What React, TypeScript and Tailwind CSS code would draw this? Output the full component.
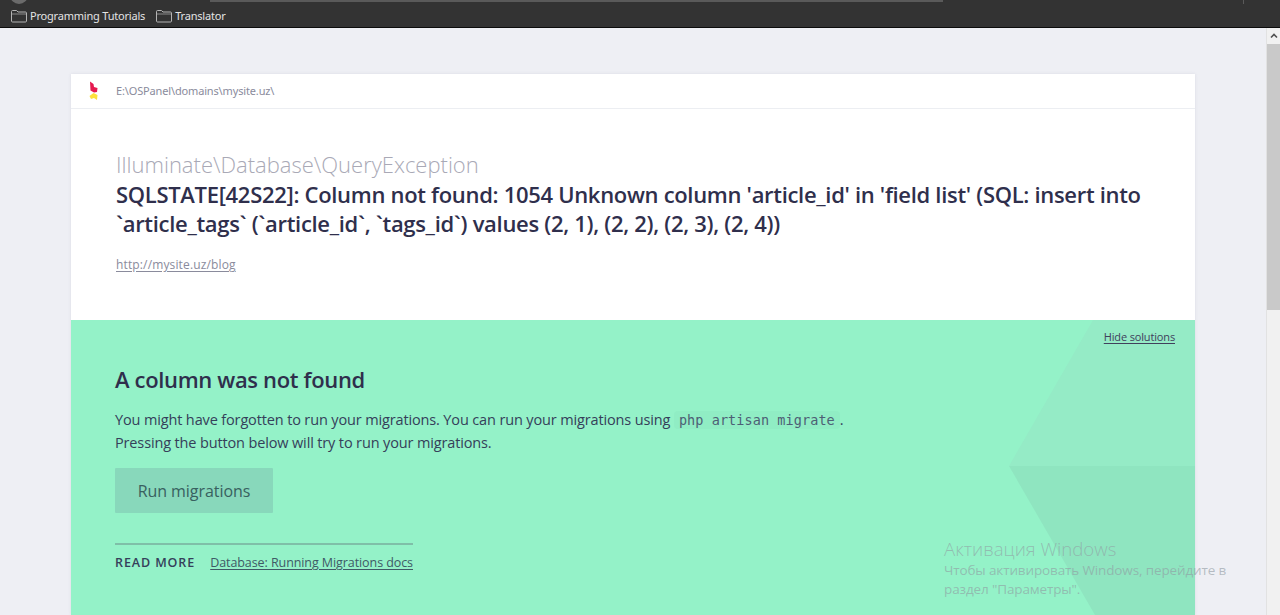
const bookmarks = ["Programming Tutorials", "Translator"];

const FolderIcon = () => (
  <svg width="16" height="14" viewBox="0 0 16 14" fill="none" className="shrink-0">
    <path d="M0.5 12V2.5C0.5 1.9 0.9 1.5 1.5 1.5H5.5L7 3H14.5C15.1 3 15.5 3.4 15.5 4V12C15.5 12.6 15.1 13 14.5 13H1.5C0.9 13 0.5 12.6 0.5 12Z" stroke="#b4b4b4" />
    <path d="M1 5H15" stroke="#8a8a8a" />
  </svg>
);

const Logo = () => (
  <svg width="12" height="20" viewBox="0 0 12 20">
    <path d="M2 0.5L5.5 3L6 6L9.5 7L9 11L6 11.5L2.5 9.5Z" fill="#e5194f" />
    <path d="M5.5 12L9.5 14L9 19L6 17L3 18L1.5 15Z" fill="#fde13c" />
  </svg>
);

const App = () => {
  return (
    <div className="relative h-[615px] w-[1280px] overflow-hidden bg-[#eeeff4] font-['Open_Sans','Noto_Sans',sans-serif]">
      {/* browser chrome */}
      <div className="relative flex h-[28px] items-end gap-[11px] border-b border-[#0c0c0c] bg-[#333333] pb-[3px] pl-[11px]">
        <div className="absolute left-[10px] top-[-14px] h-[18px] w-[18px] rounded-full bg-[#6b6b6b]" />
        <div className="absolute left-[210px] top-0 h-[2px] w-[733px] bg-[#5a5a5a]" />
        <div className="absolute left-[1243px] top-0 h-[4px] w-px bg-[#5a5a5a]" />
        {bookmarks.map((name) => (
          <div key={name} className="flex items-center gap-[3px] font-['Noto_Sans',sans-serif] text-[11px] leading-[16px] tracking-[-0.2px] text-[#e4e4e4]">
            <FolderIcon />
            <span>{name}</span>
          </div>
        ))}
      </div>

      <div className="flex h-[587px]">
        <main className="min-w-0 flex-1 pl-[71px] pr-[71px] pt-[46px]">
          <div className="w-[1124px] bg-white shadow-[0_0_3px_rgba(120,120,150,0.15)]">
            <div className="flex h-[35px] items-center gap-[16px] border-b border-[#eceef2] pl-[17px]">
              <Logo />
              <span className="font-['Noto_Sans',sans-serif] text-[11px] tracking-[-0.15px] text-[#8a8b9c]">E:\OSPanel\domains\mysite.uz\</span>
            </div>

            <div className="h-[211px] pl-[45px] pr-[45px] pt-[40px]">
              <div className="text-[22px] font-light leading-[30px] text-[#a9a9b6]">Illuminate\Database\QueryException</div>
              <h1 className="mt-[1px] text-[22px] font-semibold leading-[29px] tracking-[-0.31px] text-[#2f2f4c]">
                SQLSTATE[42S22]: Column not found: 1054 Unknown column 'article_id' in 'field list' (SQL: insert into `article_tags` (`article_id`, `tags_id`) values (2, 1), (2, 2), (2, 3), (2, 4))
              </h1>
              <a className="mt-[18px] block w-fit text-[12px] leading-[18px] tracking-[0.14px] text-[#8a8b9c] underline underline-offset-2">http://mysite.uz/blog</a>
            </div>

            <section className="relative h-[295px] overflow-hidden bg-[#94f2c8] pl-[44px] pt-[43px]">
              <svg className="absolute inset-0" width="1124" height="295" viewBox="0 0 1124 295">
                <polygon points="1022,0 938,146 1124,146 1124,0" fill="#95ebc6" />
                <polygon points="938,146 1024,295 1124,295 1124,146" fill="#8fe5c0" />
              </svg>
              <a className="absolute right-[20px] top-[9px] text-[11px] font-medium leading-[16px] tracking-[-0.15px] text-[#40405c] underline underline-offset-2">Hide solutions</a>

              <div className="relative text-[#2f2f4c]">
                <h2 className="text-[22px] font-semibold leading-[32px] tracking-[-0.34px]">A column was not found</h2>
                <p className="mt-[13px] text-[14.5px] leading-[23px] tracking-[-0.14px] text-[#35405a]">
                  You might have forgotten to run your migrations. You can run your migrations using{" "}
                  <code className="rounded-sm bg-[#90edc4] px-[5px] py-[1px] font-['DejaVu_Sans_Mono',monospace] text-[13.5px] leading-none tracking-[0.08px] text-[#4d5f75]">php artisan migrate</code>.
                  <br />
                  Pressing the button below will try to run your migrations.
                </p>
                <button className="mt-[14px] block h-[45px] w-[158px] rounded-[1px] bg-[#88d8bb] text-[16px] tracking-[-0.05px] text-[#38605f]">Run migrations</button>
                <div className="mt-[30px] flex w-[298px] items-center justify-between border-t-2 border-[#7fbfa8] pt-[9px] text-[12.5px] leading-[18px]">
                  <span className="font-semibold tracking-[0.9px] text-[#35405a]">READ MORE</span>
                  <a className="tracking-[-0.08px] text-[#3f5a66] underline underline-offset-2">Database: Running Migrations docs</a>
                </div>
              </div>
            </section>
          </div>
        </main>

        {/* page scrollbar */}
        <div className="flex w-[14px] shrink-0 flex-col border-l border-[#e2e2e2] bg-[#f1f1f1]">
          <div className="flex h-[16px] items-center justify-center">
            <svg width="8" height="6" viewBox="0 0 8 6" fill="none">
              <path d="M1 4.5L4 1.5L7 4.5" stroke="#505050" strokeWidth="1.6" />
            </svg>
          </div>
          <div className="h-[266px] bg-[#c9c9c9]" />
        </div>
      </div>

      {/* windows activation watermark */}
      <div className="absolute left-[944px] top-[537px] text-[#8f99a0]/60">
        <div className="text-[18.6px] font-light leading-[24px]">Активация Windows</div>
        <div className="text-[13.5px] leading-[19px] tracking-[-0.13px]">
          Чтобы активировать Windows, перейдите в
          <br />
          раздел "Параметры".
        </div>
      </div>
    </div>
  );
};

export default App;
